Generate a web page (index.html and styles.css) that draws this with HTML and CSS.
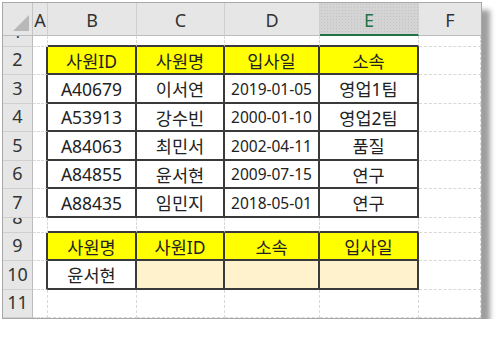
FILE: index.html
```html
<!DOCTYPE html>
<html lang="ko">
<head>
<meta charset="utf-8">
<link rel="stylesheet" href="styles.css">
</head>
<body>
<div class="wrap">
  <div class="sheet">
    <!-- header row -->
    <div class="corner"><svg width="18" height="18" viewBox="0 0 18 18"><polygon points="17,1 17,17 1,17" fill="#b8b8b8"/></svg></div>
    <div class="ch">A</div>
    <div class="ch">B</div>
    <div class="ch">C</div>
    <div class="ch">D</div>
    <div class="ch sel">E</div>
    <div class="ch last">F</div>

    <!-- row 1 -->
    <div class="rh"><span>1</span></div>
    <div class="c"></div>
    <div class="c tt"></div><div class="c tt"></div><div class="c tt"></div><div class="c tt"></div>
    <div class="c"></div>

    <!-- row 2 -->
    <div class="rh"><span>2</span></div>
    <div class="c tl"></div>
    <div class="c t y">사원ID</div><div class="c t y">사원명</div><div class="c t y">입사일</div><div class="c t y">소속</div>
    <div class="c"></div>

    <!-- row 3 -->
    <div class="rh"><span>3</span></div>
    <div class="c tl"></div>
    <div class="c t">A40679</div><div class="c t">이서연</div><div class="c t d">2019-01-05</div><div class="c t">영업1팀</div>
    <div class="c"></div>

    <!-- row 4 -->
    <div class="rh"><span>4</span></div>
    <div class="c tl"></div>
    <div class="c t">A53913</div><div class="c t">강수빈</div><div class="c t d">2000-01-10</div><div class="c t">영업2팀</div>
    <div class="c"></div>

    <!-- row 5 -->
    <div class="rh"><span>5</span></div>
    <div class="c tl"></div>
    <div class="c t">A84063</div><div class="c t">최민서</div><div class="c t d">2002-04-11</div><div class="c t">품질</div>
    <div class="c"></div>

    <!-- row 6 -->
    <div class="rh"><span>6</span></div>
    <div class="c tl"></div>
    <div class="c t">A84855</div><div class="c t">윤서현</div><div class="c t d">2009-07-15</div><div class="c t">연구</div>
    <div class="c"></div>

    <!-- row 7 -->
    <div class="rh"><span>7</span></div>
    <div class="c tl"></div>
    <div class="c t">A88435</div><div class="c t">임민지</div><div class="c t d">2018-05-01</div><div class="c t">연구</div>
    <div class="c"></div>

    <!-- row 8 -->
    <div class="rh"><span>8</span></div>
    <div class="c"></div>
    <div class="c tt"></div><div class="c tt"></div><div class="c tt"></div><div class="c tt"></div>
    <div class="c"></div>

    <!-- row 9 -->
    <div class="rh"><span>9</span></div>
    <div class="c tl"></div>
    <div class="c t y">사원명</div><div class="c t y">사원ID</div><div class="c t y">소속</div><div class="c t y">입사일</div>
    <div class="c"></div>

    <!-- row 10 -->
    <div class="rh"><span>10</span></div>
    <div class="c tl"></div>
    <div class="c t">윤서현</div><div class="c t p"></div><div class="c t p"></div><div class="c t p"></div>
    <div class="c"></div>

    <!-- row 11 -->
    <div class="rh"><span>11</span></div>
    <div class="c"></div>
    <div class="c"></div><div class="c"></div><div class="c"></div><div class="c"></div>
    <div class="c"></div>
  </div>
</div>
</body>
</html>
```

FILE: styles.css
```css
* { box-sizing: border-box; }
html, body { margin: 0; padding: 0; background: #ffffff; }
.wrap { padding: 2px 0 0 2px; }
.sheet {
  display: grid;
  width: 480px;
  grid-template-columns: 30px 15px 89px 88px 95px 99px 62px;
  grid-template-rows: 33px 11px 28px 29px 28px 29px 28px 29px 15px 28px 29px 28px;
  border: 1px solid #a8a8a8;
  background: #fff;
  box-shadow: 8px 8px 5px rgba(0,0,0,0.38);
  font-family: "Noto Sans", "Noto Sans CJK KR", sans-serif;
  color: #222;
}
.corner {
  background: #e6e6e6;
  border-right: 1px solid #c4c4c4;
  border-bottom: 1px solid #bcbcbc;
  display: flex;
  align-items: flex-end;
  justify-content: flex-end;
  padding: 0 2px 3px 0;
}
.corner svg { display: block; }
.ch {
  background: #e6e6e6;
  border-right: 1px solid #d0d0d0;
  border-bottom: 1px solid #bcbcbc;
  display: flex;
  align-items: center;
  justify-content: center;
  font-size: 18px;
  color: #333;
  padding-top: 2px;
}
.ch.last { border-right: none; }
.ch.sel {
  background-color: #d4d4d4;
  background-image: radial-gradient(#c4c4c4 0.6px, transparent 0.8px);
  background-size: 3px 3px;
  border-bottom: 2px solid #217346;
  color: #217346;
}
.rh {
  background: #e6e6e6;
  border-right: 1px solid #bcbcbc;
  border-bottom: 1px solid #d0d0d0;
  display: flex;
  align-items: flex-end;
  justify-content: center;
  overflow: hidden;
  font-size: 18px;
  color: #333;
}
.rh span {
  display: block;
  flex: none;
  height: 28px;
  line-height: 27px;
}
.c {
  border-right: 1px dashed #d8d8d8;
  border-bottom: 1px dashed #d8d8d8;
  display: flex;
  align-items: center;
  justify-content: center;
  font-size: 17.5px;
  white-space: nowrap;
  overflow: hidden;
}
.c.tt { border-bottom: 2px solid #3a3a3a; }
.c.tl { border-right: 2px solid #3a3a3a; }
.c.t {
  border-right: 2px solid #3a3a3a;
  border-bottom: 2px solid #3a3a3a;
}
.c.y { background: #ffff00; }
.c.p { background: #fff2cc; }
.c.d { font-size: 15.5px; }
```
